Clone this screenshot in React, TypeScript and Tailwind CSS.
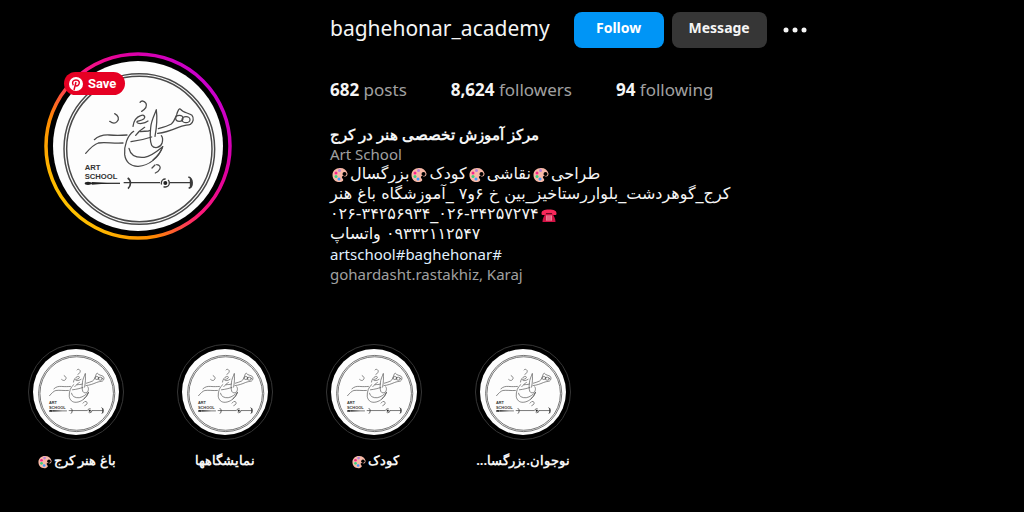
import { ReactNode } from "react";

function AcademyLogo({ className }: { className?: string }) {
  return (
    <svg viewBox="52 48 510 510" className={className} role="img" aria-label="Art School logo">
      <circle cx="307" cy="303" r="255" fill="#fdfdfd" />
      <g fill="none" stroke="#4a4a4a" strokeWidth="4.5">
        <circle cx="311" cy="312" r="226" />
        <circle cx="311" cy="312" r="218" />
      </g>
      {/* calligraphy */}
      <g
        transform="translate(126 153)"
        fill="none"
        stroke="#4a4a4a"
        strokeWidth="3.8"
        strokeLinecap="round"
        strokeLinejoin="round"
      >
        <path d="M50 131C64 118 78 116 95 117C118 119 134 118 148 117" />
        <path d="M24 172C38 156 48 145 62 141C84 138 108 143 136 141" />
        <path d="M160 137C185 134 204 129 222 123M240 112C262 110 283 102 302 94C316 88 327 88 338 85C347 80 350 66 343 58C334 50 316 51 309 40C305 34 300 45 297 56C291 70 289 78 281 84C270 90 256 94 242 98" />
        <ellipse cx="305" cy="67" rx="11" ry="9" />
        <ellipse cx="325" cy="71" rx="12" ry="9" />
        <path d="M236 42C230 57 220 75 219 96C217 114 216 134 222 148C230 159 248 156 253 142C256 132 255 124 251 119" />
        <path d="M236 42C239 65 237 94 232 121" />
        <path d="M168 106C149 119 139 148 141 176C144 198 159 212 182 211C213 209 242 187 255 152" />
        <path d="M154 157C158 176 175 186 200 184C224 180 240 164 255 152C250 169 238 182 226 192" />
        <path d="M174 118C184 105 193 99 201 94" />
        <path d="M188 107C198 104 208 108 218 103" />
        <path d="M166 91C168 76 177 63 189 59C199 55 205 62 198 69C189 76 176 74 178 79C182 85 200 83 211 75" />
        <path d="M187 19C192 12 200 15 205 22C209 32 201 41 192 46" />
        <path d="M111 53C122 58 126 69 118 77C112 84 105 83 96 76" />
        <path d="M223 216L232 207M237 206C246 207 250 213 246 220C243 226 238 229 233 231" />
      </g>
      {/* brush and arrow under the name */}
      <g fill="none" stroke="#3a3a3a" strokeWidth="4">
        <path d="M160 415H253" />
        <path d="M264 413H373M402 413H469" />
        <path d="M276 399C287 406 287 422 277 431" strokeWidth="5" />
        <path d="M458 396C472 400 474 425 459 430M465 399V429" strokeWidth="5" />
        <circle cx="389" cy="414" r="12" strokeDasharray="24 8" />
      </g>
      <g fill="#222">
        <ellipse cx="157" cy="415" rx="10" ry="5" />
        <circle cx="389" cy="414" r="6" />
        <path d="M168 411L225 415L168 419Z" />
      </g>
      <g fill="#333" fontFamily="'Liberation Sans', Arial, sans-serif" fontSize="23" fontWeight="bold">
        <text x="147" y="376">ART</text>
        <text x="147" y="402">SCHOOL</text>
      </g>
    </svg>
  );
}

function Palette({ className = "size-4" }: { className?: string }) {
  return (
    <svg viewBox="0 0 32 32" className={`mx-0.5 inline-block align-text-bottom ${className}`} aria-hidden="true">
      <path
        d="M16 2C7 2 1 8 1 16C1 25 7 31 17 30C22 29 24 26 21 23C18 19 21 17 25 19C29 20 31 17 31 13C29 6 24 2 16 2Z"
        fill="#f9b9a7"
      />
      <circle cx="25" cy="14" r="4" fill="#000" />
      <circle cx="15" cy="7" r="3" fill="#b580d8" />
      <circle cx="8" cy="12" r="3" fill="#f5268c" />
      <circle cx="8" cy="19" r="3" fill="#3bd17f" />
      <circle cx="14" cy="24" r="3" fill="#3f9bff" />
    </svg>
  );
}

function Telephone() {
  return (
    <svg viewBox="0 0 32 32" className="mx-0.5 inline-block size-4 align-text-bottom" aria-hidden="true">
      <path d="M3 30C3 23 6 19 9 13H23C26 19 29 23 29 30Z" fill="#d31145" />
      <path d="M1 13C1 7 6 5 16 5S31 7 31 13C31 15 30 16 28 16H25C23 16 22 14 22 12H10C10 14 9 16 7 16H4C2 16 1 15 1 13Z" fill="#f8285a" />
      <path d="M10 17H22V27H10Z" fill="#f4a0ae" />
      <path d="M14 17V27M18 17V27M10 20H22M10 24H22" stroke="#d31145" />
    </svg>
  );
}

function StoryRing() {
  return (
    <svg viewBox="0 0 188 188" className="absolute inset-0 size-full" aria-hidden="true">
      <defs>
        <linearGradient id="story" x1="0.1" y1="0.85" x2="0.9" y2="0.15">
          <stop offset="0" stopColor="#ffc800" />
          <stop offset="0.25" stopColor="#ff8a00" />
          <stop offset="0.5" stopColor="#ff1a78" />
          <stop offset="0.75" stopColor="#e000a0" />
          <stop offset="1" stopColor="#c800d0" />
        </linearGradient>
      </defs>
      <circle cx="94" cy="94" r="92" fill="none" stroke="url(#story)" strokeWidth="3.5" />
    </svg>
  );
}

function PersianLine({ children }: { children: ReactNode }) {
  return (
    <p dir="rtl" className="text-left font-['DejaVu_Sans',sans-serif] text-base leading-5">
      {children}
    </p>
  );
}

const stats = [
  { value: "682", label: "posts" },
  { value: "8,624", label: "followers" },
  { value: "94", label: "following" },
];

const highlights: { id: string; title: ReactNode }[] = [
  { id: "karaj", title: <>باغ هنر کرج<Palette className="size-3.5" /></> },
  { id: "exhibitions", title: "نمایشگاهها" },
  { id: "kids", title: <>کودک<Palette className="size-3.5" /></> },
  { id: "adults", title: "نوجوان.بزرگسا..." },
];

export default function App() {
  return (
    <main className="min-h-screen bg-black font-['Noto_Sans',sans-serif] text-[#f5f5f5]">
      <header className="flex items-start pt-3 pl-11">
        <div className="relative mt-10 mr-[98px] size-[188px] shrink-0 p-[9px]">
          <StoryRing />
          <AcademyLogo className="size-full" />
          <button className="absolute top-5 left-5 flex h-[23px] w-[61px] items-center gap-1 rounded-full bg-[#e60023] pl-1 font-['Roboto',sans-serif] text-[13px] font-bold text-white">
            <svg viewBox="0 0 24 24" className="size-4" aria-hidden="true">
              <circle cx="12" cy="12" r="10.5" fill="#fff" />
              <path
                d="M9 21L12 9M8 14C5 9 8 6 12 6C17 6 18 10 16 13C14 16 12 15 11 14"
                fill="none"
                stroke="#e60023"
                strokeWidth="2.2"
              />
            </svg>
            Save
          </button>
        </div>

        <section className="min-w-0 flex-1">
          <div className="flex h-9 items-center">
            <h1 className="mr-6 pb-1 text-[21px] leading-8">baghehonar_academy</h1>
            <button className="mr-2 h-9 w-[90px] rounded-lg bg-[#0095f6] pb-1 text-sm font-bold text-white">
              Follow
            </button>
            <button className="mr-4 h-9 w-[95px] rounded-lg bg-[#363636] pb-1 text-sm font-bold">
              Message
            </button>
            <button aria-label="Options">
              <svg viewBox="0 0 24 6" className="h-1.5 w-6" fill="#f5f5f5" aria-hidden="true">
                <circle cx="3" cy="3" r="2.5" />
                <circle cx="12" cy="3" r="2.5" />
                <circle cx="21" cy="3" r="2.5" />
              </svg>
            </button>
          </div>

          <ul className="mt-8 flex gap-11 text-[17px] leading-5 text-[#a0a0a0]">
            {stats.map((stat) => (
              <li key={stat.label}>
                <span className="font-bold text-[#f5f5f5]">{stat.value}</span> {stat.label}
              </li>
            ))}
          </ul>

          <div className="mt-6 text-[15px] leading-5">
            <h2 dir="rtl" className="text-left font-bold">مرکز آموزش تخصصی هنر در کرج</h2>
            <p className="text-[#a0a0a0]">Art School</p>
            <PersianLine>
              طراحی<Palette />نقاشی<Palette />کودک<Palette />بزرگسال<Palette />
            </PersianLine>
            <PersianLine>کرج_گوهردشت_بلواررستاخیز_بین خ ۶و۷ _آموزشگاه باغ هنر</PersianLine>
            <PersianLine>
              <Telephone />۰۲۶-۳۴۲۵۷۲۷۴_۰۲۶-۳۴۲۵۶۹۳۴
            </PersianLine>
            <PersianLine>۰۹۳۳۲۱۱۲۵۴۷ واتساپ</PersianLine>
            <p className="flex text-[#e0f1ff]">
              <a href="#artschool">artschool#</a>
              <a href="#baghehonar">baghehonar#</a>
            </p>
            <p className="text-[#a0a0a0]">gohardasht.rastakhiz, Karaj</p>
          </div>
        </section>
      </header>

      <ul className="mt-15 flex gap-[53px] pl-7">
        {highlights.map((item) => (
          <li key={item.id} className="w-24">
            <button className="flex w-full flex-col items-center gap-2.5">
              <span className="block size-24 rounded-full border border-[#363636] p-1">
                <AcademyLogo className="size-full" />
              </span>
              <span dir="rtl" className="text-[13px] leading-5 font-bold whitespace-nowrap">
                {item.title}
              </span>
            </button>
          </li>
        ))}
      </ul>
    </main>
  );
}
